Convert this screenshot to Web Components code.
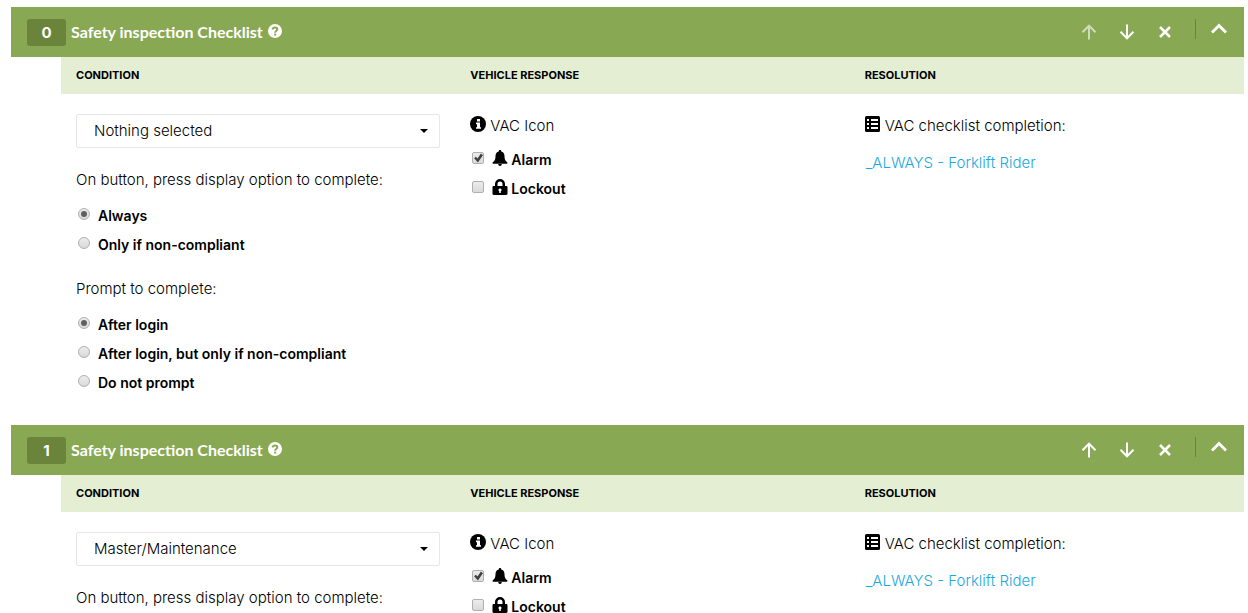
<!DOCTYPE html>
<html lang="en">
<head>
<meta charset="utf-8">
<meta name="viewport" content="width=device-width, initial-scale=1">
<title>Safety inspection Checklist</title>
<style>
  body {
    margin: 0;
    padding: 7px 4px 0 11px;
    background: #fff;
    color: #000;
    font: 300 15px/20px Inter, "Open Sans", sans-serif;
  }
</style>
</head>
<body>

<checklist-panel index="0" heading="Safety inspection Checklist" first>
  <select-box slot="condition" label="Condition" value="Nothing selected"></select-box>
  <choice-list slot="condition" type="radio" heading="On button, press display option to complete:">
    <choice-item checked>Always</choice-item>
    <choice-item>Only if non-compliant</choice-item>
  </choice-list>
  <choice-list slot="condition" type="radio" heading="Prompt to complete:">
    <choice-item checked>After login</choice-item>
    <choice-item>After login, but only if non-compliant</choice-item>
    <choice-item>Do not prompt</choice-item>
  </choice-list>

  <icon-line slot="response" icon="info">VAC Icon</icon-line>
  <choice-list slot="response" type="checkbox">
    <choice-item icon="bell" checked>Alarm</choice-item>
    <choice-item icon="lock">Lockout</choice-item>
  </choice-list>

  <icon-line slot="resolution" icon="list">VAC checklist completion:</icon-line>
  <resolution-link slot="resolution" href="#forklift-rider">_ALWAYS - Forklift Rider</resolution-link>
</checklist-panel>

<checklist-panel index="1" heading="Safety inspection Checklist">
  <select-box slot="condition" label="Condition" value="Master/Maintenance"></select-box>
  <choice-list slot="condition" type="radio" heading="On button, press display option to complete:"></choice-list>

  <icon-line slot="response" icon="info">VAC Icon</icon-line>
  <choice-list slot="response" type="checkbox">
    <choice-item icon="bell" checked>Alarm</choice-item>
    <choice-item icon="lock">Lockout</choice-item>
  </choice-list>

  <icon-line slot="resolution" icon="list">VAC checklist completion:</icon-line>
  <resolution-link slot="resolution" href="#forklift-rider">_ALWAYS - Forklift Rider</resolution-link>
</checklist-panel>

<script>
// Icon shapes, all on a 16x16 grid
const ICONS = {
  info: `
    <circle cx="8" cy="8" r="8"/>
    <path fill="#fff" d="M7 3h3v2.4H7zM6 6.6h4v4.6h1v1.6H6v-1.6h1V8.2H6z"/>`,
  bell: `
    <path d="M8 0c.8 0 1.200.5 1.200 1.100v.3c2.100.5 3.300 2.300 3.300 4.500 0 3.400.7 4.600 2.400 6 .4.400.6.700.6 1 0 .5-.4.800-.8.800H1.300c-.4 0-.8-.3-.8-.8 0-.3.200-.6.600-1 1.700-1.400 2.400-2.600 2.400-6 0-2.200 1.200-4 3.300-4.500v-.3C6.800.5 7.200 0 8 0zM6.200 14h3.600a1.800 2 0 0 1-3.600 0z"/>`,
  lock: `
    <path fill-rule="evenodd" d="M3 7V5a5 5 0 0 1 10 0v2h1.300c.6 0 1.200.5 1.200 1.200v6.600c0 .7-.6 1.200-1.200 1.200H1.700C1 16 .5 15.500.5 14.800V8.200C.5 7.500 1 7 1.700 7zm2.500 0h5V5a2.500 2.500 0 0 0-5 0zM8 9.400a1.500 1.500 0 0 0-.8 2.800V14h1.600v-1.800A1.500 1.500 0 0 0 8 9.400z"/>`,
  list: `
    <rect width="15" height="16" rx="1.5"/>
    <path fill="#fff" d="M2 3h2v2H2zM2 7h2v2H2zM2 11h2v2H2zM6 3h7v2H6zM6 7h7v2H6zM6 11h7v2H6z"/>`,
  help: `
    <circle cx="8" cy="8" r="8"/>
    <path fill="none" stroke="#88a854" stroke-width="2.2" d="M5.300 6.300C5.400 4.600 6.500 4 8 4c1.600 0 2.700.8 2.700 2.100C10.700 7.900 8.200 7.700 8.200 10"/>
    <path fill="#88a854" d="M7 11h2.400v2.200H7z"/>`,
  up: `<path fill="none" stroke="currentColor" stroke-width="2" d="M8 15.500V2M1.500 8.200L8 1.700l6.500 6.500"/>`,
  down: `<path fill="none" stroke="currentColor" stroke-width="2" d="M8 .5v13.500M1.500 7.800L8 14.300l6.500-6.500"/>`,
  close: `<path fill="none" stroke="currentColor" stroke-width="2.5" d="M3 3l10 10M13 3L3 13"/>`,
  chevron: `<path fill="none" stroke="currentColor" stroke-width="2.8" d="M1 11.500l7-7 7 7"/>`
};

/** <svg-icon name="..."> draws one of the shapes above */
class SvgIcon extends HTMLElement {
  connectedCallback() {
    if (this.shadowRoot) return;
    this.attachShadow({ mode: 'open' }).innerHTML = `
      <style>
        :host { display: inline-block; flex: none; width: 16px; height: 16px; }
        svg { display: block; width: 100%; height: 100%; fill: currentColor; }
      </style>
      <svg viewBox="0 0 16 16" aria-hidden="true">${ICONS[this.getAttribute('name')] || ''}</svg>
    `;
  }
}

/** Panel with a green title bar and three columns, one slot for each */
class ChecklistPanel extends HTMLElement {
  connectedCallback() {
    if (this.shadowRoot) return;
    const index = this.getAttribute('index');
    const heading = this.getAttribute('heading');
    const first = this.hasAttribute('first');

    this.attachShadow({ mode: 'open' }).innerHTML = `
      <style>
        :host { display: block; margin-bottom: 8px; }
        header {
          display: flex;
          align-items: center;
          height: 50px;
          padding: 0 17px 0 16px;
          background: #88a854;
          color: #fff;
        }
        .index {
          width: 39px;
          margin-right: 5px;
          border-radius: 3px;
          background: #6a853b;
          font: 700 15px/27px Inter, sans-serif;
          text-align: center;
        }
        h2 { margin: 0 5px 0 0; font: 700 16px/20px Lato, sans-serif; }
        button {
          display: flex;
          padding: 0;
          border: 0;
          background: none;
          color: inherit;
          cursor: pointer;
        }
        button:disabled { opacity: .6; cursor: default; }
        .help { margin-bottom: 2px; }
        .help svg-icon { width: 14px; height: 14px; }
        .actions { display: flex; align-items: center; gap: 22px; margin-left: auto; }
        .toggle {
          margin: 0 0 6px;
          padding: 2px 0 2px 15px;
          border-left: 1px solid #6a853b;
        }
        .body { margin-left: 50px; }
        .titles, .columns { display: grid; grid-template-columns: repeat(3, 1fr); }
        .titles { background: #e3eed3; }
        h3 { margin: 0; padding: 0 15px; font: 700 11px/37px Inter, sans-serif; }
        .columns > div { padding: 20px 15px 0; }
        .columns > div + div { padding-top: 22px; }
      </style>
      <header>
        <span class="index">${index}</span>
        <h2>${heading}</h2>
        <button class="help" aria-label="Help"><svg-icon name="help"></svg-icon></button>
        <div class="actions">
          <button aria-label="Move up" ${first ? 'disabled' : ''}><svg-icon name="up"></svg-icon></button>
          <button aria-label="Move down"><svg-icon name="down"></svg-icon></button>
          <button aria-label="Remove"><svg-icon name="close"></svg-icon></button>
          <button class="toggle" aria-label="Collapse" aria-expanded="true"><svg-icon name="chevron"></svg-icon></button>
        </div>
      </header>
      <div class="body">
        <div class="titles">
          <h3>CONDITION</h3>
          <h3>VEHICLE RESPONSE</h3>
          <h3>RESOLUTION</h3>
        </div>
        <div class="columns">
          <div><slot name="condition"></slot></div>
          <div><slot name="response"></slot></div>
          <div><slot name="resolution"></slot></div>
        </div>
      </div>
    `;

    const toggle = this.shadowRoot.querySelector('.toggle');
    const body = this.shadowRoot.querySelector('.body');
    toggle.addEventListener('click', () => {
      body.hidden = !body.hidden;
      toggle.setAttribute('aria-expanded', String(!body.hidden));
    });
  }
}

/** Drop-down with a small caret */
class SelectBox extends HTMLElement {
  connectedCallback() {
    if (this.shadowRoot) return;
    const value = this.getAttribute('value');
    const options = ['Nothing selected', 'Master/Maintenance'];

    this.attachShadow({ mode: 'open' }).innerHTML = `
      <style>
        :host { display: grid; align-items: center; margin-bottom: 22px; }
        select, .caret { grid-area: 1 / 1; }
        select {
          appearance: none;
          box-sizing: border-box;
          width: 100%;
          height: 34px;
          padding: 0 32px 0 17px;
          border: 1px solid #e7e7e7;
          border-radius: 2px;
          background: #fff;
          color: inherit;
          font: inherit;
        }
        .caret {
          justify-self: end;
          margin-right: 12px;
          border: 4px solid transparent;
          border-top-color: #000;
          border-bottom: 0;
          pointer-events: none;
        }
      </style>
      <select aria-label="${this.getAttribute('label')}">
        ${options.map(o => `<option ${o === value ? 'selected' : ''}>${o}</option>`).join('')}
      </select>
      <span class="caret"></span>
    `;
  }
}

/** Data holder for one option; choice-list reads it and renders the control */
class ChoiceItem extends HTMLElement {
  connectedCallback() {
    if (this.shadowRoot) return;
    this.attachShadow({ mode: 'open' }).innerHTML = `
      <style>:host { display: inline; }</style><slot></slot>
    `;
  }
}

/** Group of radios or tick boxes, built from its choice-item children */
class ChoiceList extends HTMLElement {
  connectedCallback() {
    if (this.shadowRoot) return;
    const type = this.getAttribute('type');
    const heading = this.getAttribute('heading');
    const items = [...this.querySelectorAll('choice-item')];

    this.attachShadow({ mode: 'open' }).innerHTML = `
      <style>
        :host { display: block; }
        :host(:not(:last-child)) { margin-bottom: 20px; }
        p { margin: 0; }
        p + .row { margin-top: 11px; }
        .row { display: flex; align-items: center; height: 29px; }
        label { display: flex; align-items: center; font-size: 14px; font-weight: 600; }
        input {
          appearance: none;
          display: grid;
          place-items: center;
          box-sizing: border-box;
          width: 12px;
          height: 12px;
          margin: 0 8px 3px 2px;
          border: 1px solid #b0b0b0;
          background: linear-gradient(#ececec, #dadada);
        }
        input[type=radio] { border-radius: 50%; }
        input[type=checkbox] { border-radius: 2px; }
        input[type=radio]:checked::before {
          content: "";
          width: 6px;
          height: 6px;
          border-radius: 50%;
          background: #606060;
        }
        input[type=checkbox]:checked::before {
          content: "";
          width: 10px;
          height: 10px;
          background: #404040;
          clip-path: polygon(8% 52%, 26% 38%, 42% 56%, 76% 6%, 96% 22%, 46% 94%);
        }
        svg-icon { margin: 0 3px 3px 0; }
      </style>
      <div role="${type === 'radio' ? 'radiogroup' : 'group'}" ${heading ? 'aria-labelledby="heading"' : 'aria-label="Vehicle response"'}>
        ${heading ? `<p id="heading">${heading}</p>` : ''}
        ${items.map((item, i) => `
          <div class="row">
            <input type="${type}" id="item${i}" name="choice" ${item.hasAttribute('checked') ? 'checked' : ''}>
            <label for="item${i}">
              ${item.hasAttribute('icon') ? `<svg-icon name="${item.getAttribute('icon')}"></svg-icon>` : ''}
              <slot name="item${i}"></slot>
            </label>
          </div>
        `).join('')}
      </div>
    `;
    items.forEach((item, i) => { item.slot = 'item' + i; });
  }
}

/** Line of text that starts with an icon */
class IconLine extends HTMLElement {
  connectedCallback() {
    if (this.shadowRoot) return;
    this.attachShadow({ mode: 'open' }).innerHTML = `
      <style>
        :host { display: flex; align-items: center; height: 20px; margin-bottom: 9px; }
        svg-icon { margin: 0 4px 4px 0; }
      </style>
      <svg-icon name="${this.getAttribute('icon')}"></svg-icon>
      <span><slot></slot></span>
    `;
  }
}

class ResolutionLink extends HTMLElement {
  connectedCallback() {
    if (this.shadowRoot) return;
    this.attachShadow({ mode: 'open' }).innerHTML = `
      <style>
        :host { display: block; padding: 8px 1px 0; }
        a { color: #1ba8e0; text-decoration: none; }
        a:hover { text-decoration: underline; }
      </style>
      <a href="${this.getAttribute('href')}"><slot></slot></a>
    `;
  }
}

customElements.define('svg-icon', SvgIcon);
customElements.define('choice-item', ChoiceItem);
customElements.define('choice-list', ChoiceList);
customElements.define('select-box', SelectBox);
customElements.define('icon-line', IconLine);
customElements.define('resolution-link', ResolutionLink);
customElements.define('checklist-panel', ChecklistPanel);
</script>
</body>
</html>
